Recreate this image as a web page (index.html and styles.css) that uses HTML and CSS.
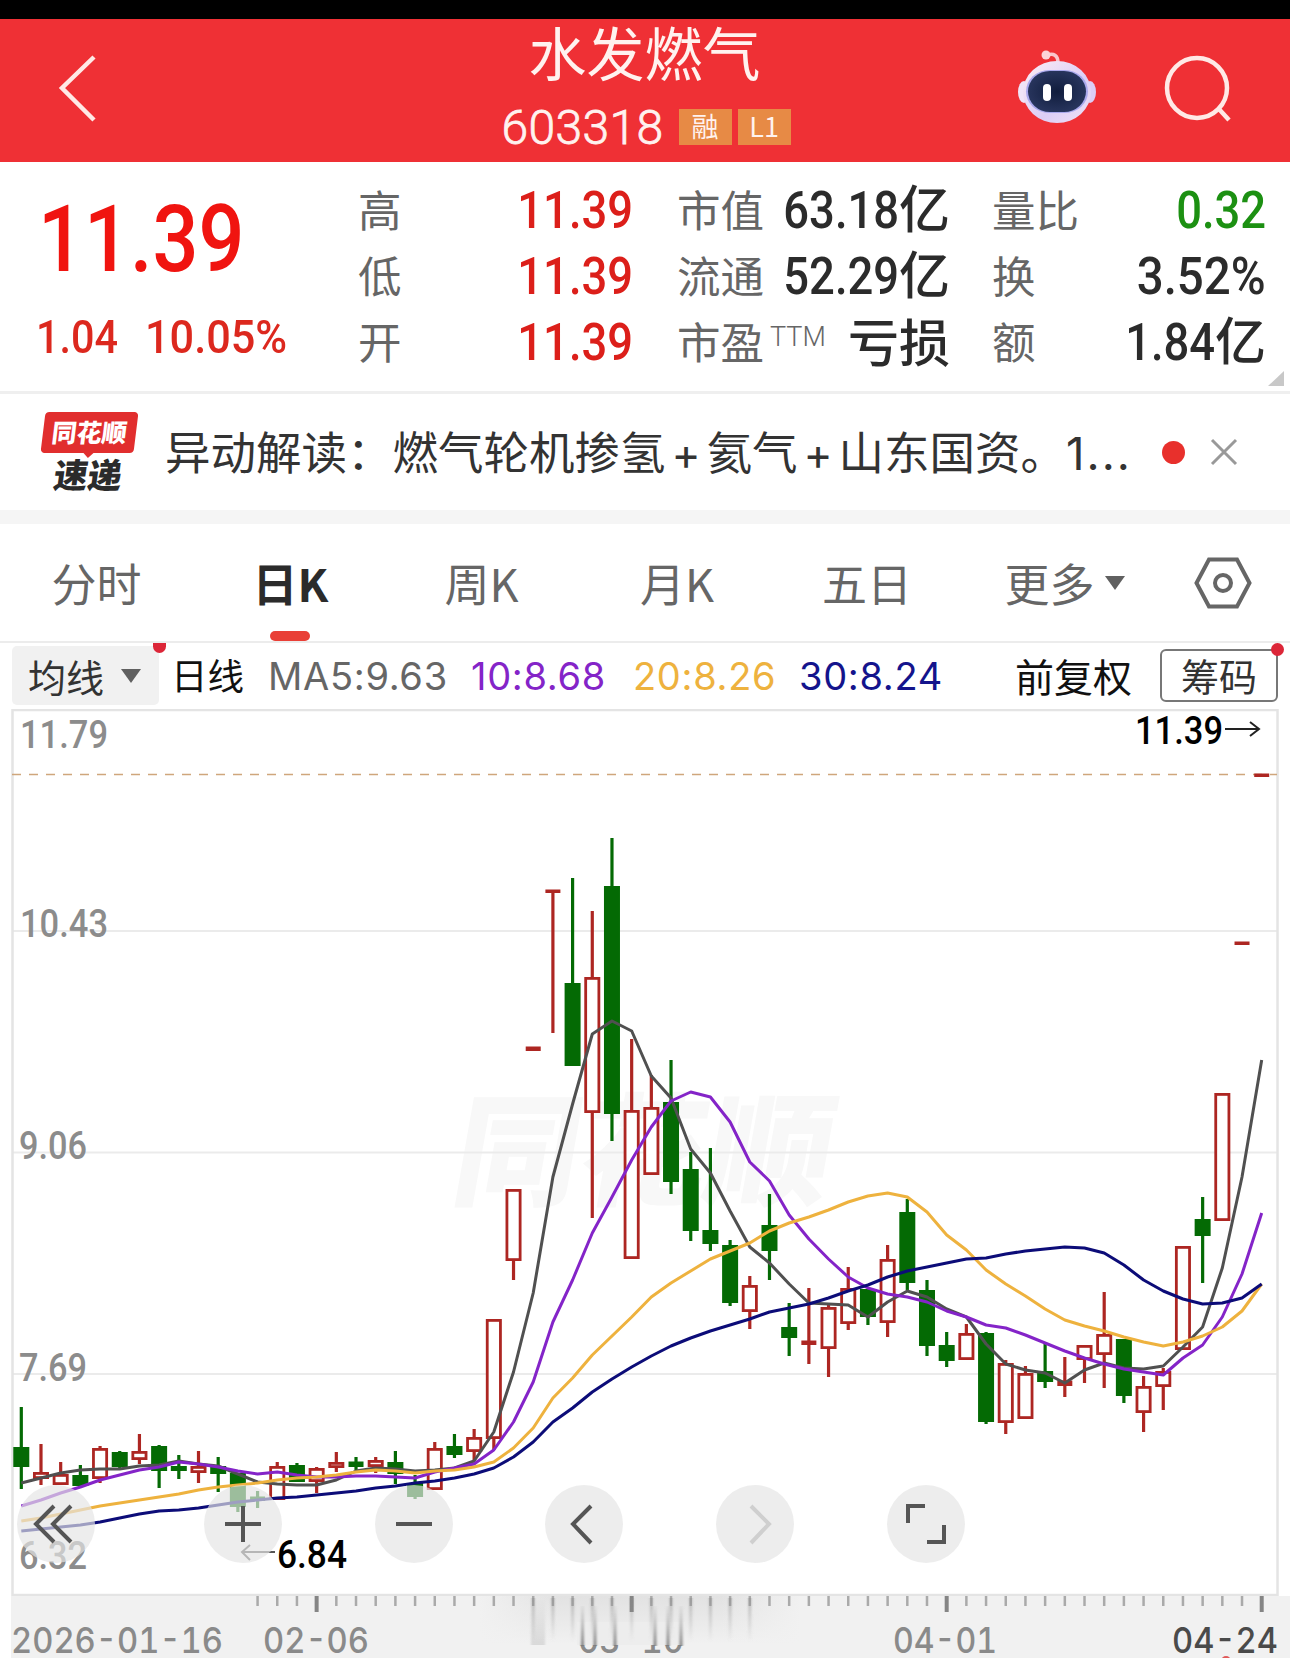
FILE: index.html
```html
<!DOCTYPE html>
<html lang="zh-CN">
<head>
  <meta charset="UTF-8" />
  <meta name="viewport" content="width=device-width, initial-scale=1.0"/>
  <title>水发燃气 603318</title>
  <link rel="stylesheet" href="styles.css">
</head>
<body>
  <div class="status-bar"></div>
  <header class="header">
    <svg class="back" width="40" height="70" viewBox="0 0 40 70"><path d="M36 4 L4 35 L36 67"/></svg>
    <div class="title">
      <h1>水发燃气</h1>
      <div class="code"><span class="code-num">603318</span><span class="tag">融</span><span class="tag">L1</span></div>
    </div>
    <div class="header-icons">
      <svg width="80" height="76" viewBox="0 0 80 76">
        <defs>
          <linearGradient id="shell" x1="0" y1="0" x2="1" y2="1">
            <stop offset="0" stop-color="#fdeef5"/>
            <stop offset="0.6" stop-color="#dccdf6"/>
            <stop offset="1" stop-color="#f0e2f5"/>
          </linearGradient>
          <radialGradient id="visor">
            <stop offset="0" stop-color="#101c3c"/>
            <stop offset="1" stop-color="#27345c"/>
          </radialGradient>
        </defs>
        <path d="M30 6 Q41 3 41 14" fill="none" stroke="#f9c5cc" stroke-width="3.5"/>
        <circle cx="29" cy="6" r="4.5" fill="#fcd3da"/>
        <ellipse cx="7" cy="43" rx="6" ry="11" fill="#f0e4f8"/>
        <ellipse cx="73" cy="43" rx="6" ry="11" fill="#dccdf5"/>
        <ellipse cx="40" cy="43" rx="34" ry="31" fill="url(#shell)"/>
        <rect x="9" y="21" width="62" height="43" rx="23" fill="#a9a8ec"/>
        <rect x="11" y="22" width="58" height="41" rx="22" fill="url(#visor)"/>
        <rect x="26" y="35" width="8" height="17" rx="4" fill="#fff"/>
        <rect x="47" y="35" width="8" height="17" rx="4" fill="#fff"/>
      </svg>
      <svg class="search" width="70" height="70" viewBox="0 0 70 70"><circle cx="33" cy="33" r="30"/><path d="M54 53 L65 65"/></svg>
    </div>
  </header>

  <section class="quote">
    <div class="price-box">
      <div class="price num">11.39</div>
      <div class="change"><span class="num">1.04</span><span class="num">10.05%</span></div>
    </div>
    <ul class="stats">
      <li><span>高</span><b class="red"><i class="num">11.39</i></b></li>
      <li><span>低</span><b class="red"><i class="num">11.39</i></b></li>
      <li><span>开</span><b class="red"><i class="num">11.39</i></b></li>
    </ul>
    <ul class="stats">
      <li><span>市值</span><b><i class="num">63.18</i>亿</b></li>
      <li><span>流通</span><b><i class="num">52.29</i>亿</b></li>
      <li><span>市盈<sup>TTM</sup></span><b>亏损</b></li>
    </ul>
    <ul class="stats">
      <li><span>量比</span><b class="green"><i class="num">0.32</i></b></li>
      <li><span>换</span><b><i class="num percent">3.52%</i></b></li>
      <li><span>额</span><b><i class="num">1.84</i>亿</b></li>
    </ul>
    <div class="corner"></div>
  </section>

  <section class="news">
    <div class="news-logo">
      <div class="logo-top"><span>同花顺</span></div>
      <div class="logo-bottom">速递</div>
    </div>
    <p>异动解读：燃气轮机掺氢<span class="plus">+</span>氦气<span class="plus">+</span>山东国资。<span class="latin">1...</span></p>
    <span class="news-dot"></span>
    <svg class="close" width="28" height="28" viewBox="0 0 28 28"><path d="M2 2 L26 26 M26 2 L2 26"/></svg>
  </section>

  <nav class="tabs">
    <a>分时</a>
    <a class="active">日K</a>
    <a>周K</a>
    <a>月K</a>
    <a>五日</a>
    <a>更多<i class="caret"></i></a>
    <a><svg class="gear" width="58" height="52" viewBox="0 0 58 52"><path d="M15 2.500 H43 L55.500 26 L43 49.500 H15 L2.500 26 Z"/><circle cx="29" cy="26" r="8"/></svg></a>
  </nav>

  <div class="ma-bar">
    <div class="ma-select">均线<i class="caret"></i></div>
    <span class="period">日线</span>
    <span class="ma ma5">MA5:9.63</span>
    <span class="ma ma10">10:8.68</span>
    <span class="ma ma20">20:8.26</span>
    <span class="ma ma30">30:8.24</span>
    <span class="adjust">前复权</span>
    <div class="chips">筹码</div>
  </div>

  <div class="chart">
    <svg id="kline" width="1290" height="949" viewBox="0 709 1290 949">
      <defs>
        <linearGradient id="fade" x1="0" y1="0" x2="0" y2="1">
          <stop offset="0" stop-color="#e2e2e2"/>
          <stop offset="1" stop-color="#f1f1f1"/>
        </linearGradient>
        <linearGradient id="fadeSide">
          <stop offset="0" stop-color="#f1f1f1"/>
          <stop offset="0.25" stop-color="#f1f1f1" stop-opacity="0"/>
          <stop offset="0.75" stop-color="#f1f1f1" stop-opacity="0"/>
          <stop offset="1" stop-color="#f1f1f1"/>
        </linearGradient>
        <linearGradient id="streak" x1="0" y1="0" x2="0" y2="1">
          <stop offset="0" stop-color="#888" stop-opacity="0.5"/>
          <stop offset="1" stop-color="#999" stop-opacity="0"/>
        </linearGradient>
        <linearGradient id="streakUp" x1="0" y1="1" x2="0" y2="0">
          <stop offset="0" stop-color="#777" stop-opacity="0.9"/>
          <stop offset="1" stop-color="#999" stop-opacity="0.1"/>
        </linearGradient>
        <filter id="soft" x="-1" y="-0.1" width="3" height="1.2"><feGaussianBlur stdDeviation="1 0.5"/></filter>
      </defs>
      <text class="watermark" x="0" y="0" transform="translate(448 1196) skewX(-10)" textLength="378" lengthAdjust="spacingAndGlyphs">同花顺</text>
      <g id="grid"></g>
      <g id="axis"></g>
      <g id="candles"></g>
      <g id="lines"></g>
      <g id="labels"></g>
    </svg>
    <div class="controls">
      <button class="first"><svg viewBox="0 0 78 78"><path d="M37 21 L19 39 L37 57 M54 21 L36 39 L54 57"/></svg></button>
      <button><svg viewBox="0 0 78 78"><path d="M21 39 H57 M39 21 V57"/></svg></button>
      <button><svg viewBox="0 0 78 78"><path d="M21 39 H57"/></svg></button>
      <button><svg viewBox="0 0 78 78"><path d="M46 21 L28 39 L46 58"/></svg></button>
      <button class="disabled"><svg viewBox="0 0 78 78"><path d="M35 21 L53 39 L35 58"/></svg></button>
      <button><svg viewBox="0 0 78 78"><path d="M21 38 V21 H38 M57 40 V57 H40"/></svg></button>
    </div>
  </div>

  <script>
    const X0 = 21.3;
    const STEP = 19.689;
    const RED = "#ad2622";
    const GREEN = "#046a04";

    // [up, high, top, bottom, low]
    const candles = [
      [0,1407,1447,1467,1489],[1,1444,1472,1479,1485],[1,1462,1474,1485,1485],[0,1465,1475,1486,1486],
      [1,1446,1448,1479,1483],[0,1451,1452,1467,1468],[1,1434,1451,1460,1464],[0,1445,1446,1471,1488],
      [0,1455,1466,1471,1479],[1,1451,1466,1473,1483],[0,1457,1466,1474,1492],[0,1473,1473,1507,1512],
      [0,1491,1497,1500,1508],[1,1462,1466,1500,1500],[0,1463,1465,1482,1482],[1,1467,1468,1482,1493],
      [1,1452,1462,1468,1472],[0,1457,1462,1466,1470],[1,1457,1460,1467,1473],[0,1451,1462,1474,1484],
      [0,1475,1483,1497,1499],[1,1442,1448,1490,1490],[0,1434,1446,1455,1458],[1,1429,1437,1452,1460],
      [1,1319,1319,1439,1450],[1,1189,1189,1261,1280],[1,1047,1047,1050,1050],[1,890,890,892,1033],
      [0,878,983,1066,1066],[1,911,977,1113,1218],[0,838,886,1114,1141],[1,1039,1110,1259,1259],
      [1,1075,1107,1175,1175],[0,1060,1102,1182,1194],[0,1152,1169,1231,1241],[0,1148,1230,1244,1251],
      [0,1240,1245,1303,1306],[1,1276,1285,1312,1329],[0,1194,1225,1251,1280],[0,1303,1327,1338,1356],
      [1,1288,1341,1344,1364],[1,1305,1307,1349,1377],[1,1267,1288,1324,1330],[0,1289,1289,1317,1325],
      [1,1245,1259,1323,1337],[0,1199,1212,1283,1290],[0,1280,1290,1346,1356],[0,1332,1345,1361,1367],
      [1,1324,1333,1360,1360],[0,1332,1333,1422,1424],[1,1360,1363,1423,1434],[1,1366,1373,1419,1419],
      [0,1343,1371,1382,1388],[1,1357,1381,1385,1397],[1,1345,1345,1360,1383],[1,1292,1334,1355,1388],
      [0,1339,1339,1396,1403],[1,1376,1386,1413,1432],[1,1368,1371,1387,1410],[1,1246,1246,1350,1350],
      [0,1197,1219,1236,1283],[1,1093,1093,1221,1221],[1,942,942,944,944],[1,774,774,776,776]
    ];

    // moving averages, one value per candle
    const averages = {
      "#505050": [1483,1478,1473,1470,1469,1469,1466,1465,1461,1464,1466,1474,1482,1484,1485,1485,1480,1471,1468,1469,1471,1470,1468,1461,1432,1372,1293,1177,1104,1034,1021,1031,1076,1098,1149,1173,1211,1247,1263,1284,1303,1304,1305,1317,1302,1291,1297,1309,1317,1344,1364,1370,1373,1383,1370,1363,1368,1369,1366,1347,1327,1268,1177,1060],
      "#8424c8": [1506,1500,1493,1487,1480,1475,1470,1467,1462,1464,1467,1471,1474,1472,1475,1477,1477,1476,1476,1477,1478,1472,1468,1464,1450,1422,1382,1322,1280,1233,1197,1160,1127,1101,1092,1097,1122,1162,1181,1215,1239,1259,1277,1288,1294,1297,1302,1311,1317,1325,1328,1335,1343,1351,1358,1364,1369,1372,1375,1358,1345,1317,1274,1213],
      "#eeb23e": [1521,1518,1514,1510,1506,1503,1500,1497,1494,1490,1487,1485,1483,1480,1478,1477,1475,1472,1470,1471,1473,1471,1470,1467,1462,1448,1428,1398,1378,1355,1336,1317,1297,1283,1271,1259,1251,1243,1231,1223,1217,1210,1202,1196,1193,1197,1212,1235,1250,1270,1284,1296,1309,1320,1326,1331,1337,1342,1346,1342,1336,1327,1311,1284],
      "#0c0c78": [1531,1529,1527,1525,1522,1518,1514,1511,1510,1508,1505,1502,1500,1498,1497,1495,1493,1491,1488,1486,1483,1481,1478,1474,1468,1457,1442,1422,1408,1392,1379,1367,1356,1346,1338,1331,1325,1319,1312,1308,1304,1298,1291,1285,1277,1271,1267,1263,1259,1258,1254,1251,1249,1247,1248,1253,1265,1280,1291,1299,1304,1303,1298,1284]
    };

    function add(parent, tag, attrs, text) {
      const el = document.createElementNS("http://www.w3.org/2000/svg", tag);
      for (const key in attrs) el.setAttribute(key, attrs[key]);
      if (text) el.textContent = text;
      document.getElementById(parent).appendChild(el);
    }

    function line(parent, x1, y1, x2, y2, color, width, dash) {
      add(parent, "line", { x1, y1, x2, y2, stroke: color, "stroke-width": width, "stroke-dasharray": dash || "none" });
    }

    function label(text, x, y, width, cls) {
      add("labels", "text", { x, y, textLength: width, lengthAdjust: "spacingAndGlyphs", class: cls }, text);
    }

    function drawGrid() {
      [931, 1152.5, 1374].forEach(y => line("grid", 12, y, 1277, y, "#ebebeb", 2));
      add("grid", "rect", { x: 12.5, y: 710, width: 1265, height: 885, fill: "none", stroke: "#e4e4e4", "stroke-width": 2.5 });
      line("grid", 12, 774.5, 1277, 774.5, "#cfa67c", 1.5, "9 8");
    }

    function drawAxis() {
      add("axis", "rect", { x: 11, y: 1596, width: 1279, height: 62, fill: "#f1f1f1" });
      add("axis", "rect", { x: 480, y: 1596, width: 320, height: 48, fill: "url(#fade)" });
      add("axis", "rect", { x: 479, y: 1596, width: 322, height: 48, fill: "url(#fadeSide)" });
      for (let i = 12; i < candles.length; i++) {
        const x = X0 + i * STEP;
        const big = i % 16 === 15;
        line("axis", x, 1596, x, big ? 1612 : 1606, big ? "#858585" : "#aaa", big ? 4 : 2.5);
      }
    }

    function drawCandles() {
      candles.forEach(([up, high, top, bottom, low], i) => {
        const x = X0 + i * STEP;
        const color = up ? RED : GREEN;
        if (high < top) line("candles", x, high, x, top, color, 3.2);
        if (low > bottom) line("candles", x, bottom, x, low, color, 3.2);
        if (bottom - top < 5) {
          add("candles", "rect", { x: x - 7.5, y: top - 0.5, width: 15, height: bottom - top + 1.5, fill: color });
        } else if (up) {
          add("candles", "rect", { x: x - 6.6, y: top + 1.4, width: 13.2, height: bottom - top - 2.8, fill: "#fff", stroke: color, "stroke-width": 2.8 });
        } else {
          add("candles", "rect", { x: x - 8, y: top, width: 16, height: bottom - top, fill: color });
        }
      });
    }

    function drawLines() {
      for (const color in averages) {
        const points = averages[color].map((y, i) => (X0 + i * STEP).toFixed(1) + "," + y).join(" ");
        add("lines", "polyline", { points, fill: "none", stroke: color, "stroke-width": 3, "stroke-linejoin": "round" });
      }
    }

    // the middle date is washed out, only its lower edge stays readable
    function drawStreaks() {
      add("labels", "rect", { x: 577, y: 1622, width: 108, height: 23, fill: "#ededed" });
      for (let i = 26; i < 38; i++) {
        add("labels", "rect", { x: X0 + i * STEP - 1.5, y: 1598, width: 3, height: 44, fill: "url(#streak)", filter: "url(#soft)" });
      }
      [582.5, 595, 615, 655, 668, 681].forEach(x => {
        add("labels", "rect", { x: x - 1.5, y: 1606, width: 3, height: 40, fill: "url(#streakUp)", filter: "url(#soft)" });
      });
      add("labels", "rect", { x: 531, y: 1600, width: 14, height: 45, fill: "url(#streakUp)", opacity: 0.22, filter: "url(#soft)" });
    }

    function drawLabels() {
      label("11.79", 20, 748, 88, "scale");
      label("10.43", 20, 937, 88, "scale");
      label("9.06", 19, 1159, 68, "scale");
      label("7.69", 19, 1381, 68, "scale");
      label("6.32", 19, 1569, 68, "scale");
      label("11.39", 1135, 744, 88, "mark");
      label("6.84", 277, 1568, 70, "mark");
      add("labels", "path", { d: "M1225 729 H1259 M1250 722 L1259 729 L1250 736", class: "arrow" });
      add("labels", "path", { d: "M275 1552 H242 M250 1545 L242 1552 L250 1560", class: "arrow light" });
      label("2026-01-16", 11, 1653, 212, "date");
      label("02-06", 263, 1653, 106, "date");
      label("03-10", 578, 1653, 106, "date");
      drawStreaks();
      label("04-01", 893, 1653, 104, "date");
      label("04-24", 1172, 1653, 106, "date last");
      add("labels", "circle", { cx: 1226, cy: 1661, r: 5, fill: "#e05a5a" });
    }

    drawGrid();
    drawAxis();
    drawCandles();
    drawLines();
    drawLabels();
  </script>
</body>
</html>
```
FILE: styles.css
```css
* {
  box-sizing: border-box;
}

body {
  margin: 0;
  width: 1290px;
  height: 1658px;
  overflow: hidden;
  background: #fff;
  font-family: "Noto Sans CJK SC", sans-serif;
  color: #2b2b2b;
}

h1, p, ul {
  margin: 0;
  padding: 0;
  font-weight: normal;
}

i {
  font-style: normal;
}

.num {
  display: inline-block;
  font-family: Roboto, sans-serif;
  font-weight: 500;
  transform: scaleX(0.89);
  transform-origin: right;
}

.status-bar {
  height: 19px;
  background: #000;
}

/* header */
.header {
  height: 143px;
  padding: 0 56px 0 58px;
  display: grid;
  grid-template-columns: 1fr auto 1fr;
  background: #ef3035;
  color: #fff2ef;
}

.back {
  margin-top: 34px;
}

.back path, .search {
  fill: none;
  stroke: #ffe9e6;
  stroke-width: 4.5;
}

.title {
  text-align: center;
}

.title h1 {
  margin-left: -3px;
  font-size: 58px;
  line-height: 65px;
}

.code {
  display: flex;
  align-items: center;
  justify-content: center;
  gap: 6px;
  height: 36px;
  margin-top: 25px;
}

.code-num {
  font-family: Roboto, sans-serif;
  font-weight: 300;
  font-size: 48px;
  letter-spacing: 0.4px;
  margin-right: 9px;
  -webkit-text-stroke: 0.8px #fff2ef;
}

.tag {
  width: 53px;
  height: 36px;
  line-height: 34px;
  background: #e78a45;
  font-size: 27px;
}

.header-icons {
  display: flex;
  justify-content: flex-end;
  gap: 67px;
  padding-top: 30px;
}

.search {
  margin-top: 6px;
}

/* quote */
.quote {
  position: relative;
  height: 232px;
  padding: 13px 24px 0 38px;
  display: grid;
  grid-template-columns: 320px 275px 44px 273px 42px 274px;
  border-bottom: 3px solid #efefef;
}

.quote .stats:nth-child(3) {
  grid-column: 4;
}

.quote .stats:nth-child(4) {
  grid-column: 6;
}

.price-box {
  color: #dc281e;
}

.price {
  font-size: 93px;
  line-height: 110px;
  margin-top: 10px;
  color: #f01410;
  transform: scaleX(0.87);
  transform-origin: left;
}

.change {
  font-size: 47px;
  line-height: 60px;
  margin: 8px 0 0 -2px;
}

.change .num {
  width: 109px;
  transform: scaleX(0.88);
  transform-origin: left;
}

.change .num + .num {
  transform: scaleX(0.92);
}

.stats {
  list-style: none;
}

.stats li {
  display: flex;
  justify-content: space-between;
  align-items: center;
  height: 66px;
  font-size: 43.5px;
  line-height: 66px;
  color: #666;
}

.stats li > span {
  padding-top: 2px;
}

.stats b {
  font-size: 51px;
  font-weight: 500;
  color: #2b2b2b;
}

.stats b.red {
  color: #dc1f1a;
}

.stats b.green {
  color: #1c9012;
}

.stats .percent {
  transform: scaleX(0.93);
}

.stats sup {
  font: 300 27px Roboto, sans-serif;
  margin-left: 6px;
  vertical-align: 13px;
}

.corner {
  position: absolute;
  right: 6px;
  bottom: 5px;
  border-left: 16px solid transparent;
  border-bottom: 15px solid #c8c8c8;
}

/* news */
.news {
  height: 130px;
  padding: 0 52px 0 41px;
  display: flex;
  align-items: center;
  border-bottom: 14px solid #f5f5f5;
}

.news-logo {
  width: 95px;
  margin: 0 29px 2px 0;
  text-align: center;
}

.logo-top {
  position: relative;
  height: 41px;
  margin-left: 2px;
  background: #e12e2e;
  border-radius: 4px;
  color: #fff;
  font-size: 25px;
  font-weight: 900;
  line-height: 39px;
  transform: skewX(-7deg);
}

.logo-top::after {
  content: "";
  position: absolute;
  left: 42px;
  top: 40px;
  border: 6px solid transparent;
  border-top-color: #e12e2e;
}

.logo-bottom {
  height: 38px;
  font-size: 34px;
  font-weight: 900;
  line-height: 42px;
  transform: skewX(-8deg);
}

.news p {
  width: 965px;
  margin-bottom: 5px;
  font-size: 45.5px;
  white-space: nowrap;
  color: #333;
}

.plus {
  display: inline-block;
  width: 41px;
  text-align: center;
  font: 44px/40px Inter, sans-serif;
}

.latin {
  font-family: Inter, sans-serif;
  letter-spacing: 2px;
}

.news-dot {
  width: 23px;
  height: 23px;
  margin: 0 25px 0 32px;
  border-radius: 50%;
  background: #e8302c;
}

.close {
  fill: none;
  stroke: #999;
  stroke-width: 3;
}

/* tabs */
.tabs {
  height: 119px;
  display: grid;
  grid-template-columns: 193px 195px 187px 204px 176px 219px 97px;
  border-bottom: 2px solid #ececec;
}

.tabs a {
  position: relative;
  display: flex;
  align-items: center;
  justify-content: center;
  font-size: 45px;
  color: #666;
}

.tabs .active {
  color: #2b2b2b;
  font-weight: bold;
}

.tabs .active::after {
  content: "";
  position: absolute;
  left: 77px;
  bottom: 0;
  width: 40px;
  height: 10px;
  border-radius: 5px;
  background: #e93f36;
}

.caret {
  margin-left: 10px;
  border: 10px solid transparent;
  border-top: 14px solid #606060;
  border-bottom: 0;
}

.gear {
  fill: none;
  stroke: #666;
  stroke-width: 4;
}

/* moving average bar */
.ma-bar {
  height: 66px;
  padding-left: 12px;
  padding-bottom: 1px;
  display: flex;
  align-items: center;
  font-size: 38px;
  line-height: 56px;
  color: #111;
}

.ma-select {
  position: relative;
  width: 147px;
  height: 59px;
  padding-left: 16px;
  display: flex;
  align-items: center;
  background: #f1f1f1;
  border-radius: 5px;
  color: #333;
}

.ma-select .caret {
  margin-left: 17px;
}

.ma-select::after {
  content: "";
  position: absolute;
  right: -7px;
  top: -3px;
  width: 13px;
  height: 10px;
  border-radius: 0 0 7px 7px;
  background: #dc2638;
}

.period {
  width: 76px;
  margin: 0 21px 1px 12px;
  font-size: 36.5px;
}

.ma {
  font-family: Inter, sans-serif;
  letter-spacing: 0.7px;
}

.ma5 {
  width: 203px;
  color: #666;
}

.ma10 {
  width: 162px;
  color: #8424c8;
}

.ma20 {
  width: 166px;
  color: #eeb23e;
}

.ma30 {
  width: 216px;
  color: #14148c;
}

.adjust {
  width: 145px;
  margin-bottom: 2px;
  font-size: 39px;
}

.chips {
  position: relative;
  width: 118px;
  height: 53px;
  line-height: 47px;
  text-align: center;
  border: 2px solid #777;
  border-radius: 6px;
  color: #333;
}

.chips::after {
  content: "";
  position: absolute;
  right: -8px;
  top: -8px;
  width: 13px;
  height: 13px;
  border-radius: 50%;
  background: #dc2638;
}

/* chart */
.chart {
  position: relative;
}

#kline {
  display: block;
}

.watermark {
  font-size: 122px;
  font-weight: 900;
  fill: #f8f8f8;
}

.scale, .mark {
  font-family: Roboto, sans-serif;
  font-size: 38px;
  font-weight: 500;
  fill: #8c8c8c;
}

.mark {
  fill: #000;
}

.date {
  font-family: Inter, sans-serif;
  font-size: 36px;
  font-weight: 500;
  font-feature-settings: "tnum";
  fill: #8a8a8a;
}

.date.last {
  fill: #4a4a4a;
}

.arrow {
  fill: none;
  stroke: #222;
  stroke-width: 2;
}

.arrow.light {
  stroke: #555;
}

.controls {
  position: absolute;
  left: 17px;
  top: 776px;
  display: flex;
  gap: 92.8px;
}

.controls button {
  width: 78px;
  height: 78px;
  padding: 0;
  border: none;
  border-radius: 50%;
  background: rgba(228, 228, 228, 0.68);
}

.controls .first {
  margin-right: 16px;
}

.controls svg {
  display: block;
  fill: none;
  stroke: #555;
  stroke-width: 4;
}

.controls .disabled svg {
  stroke: #cfcfcf;
}
```
